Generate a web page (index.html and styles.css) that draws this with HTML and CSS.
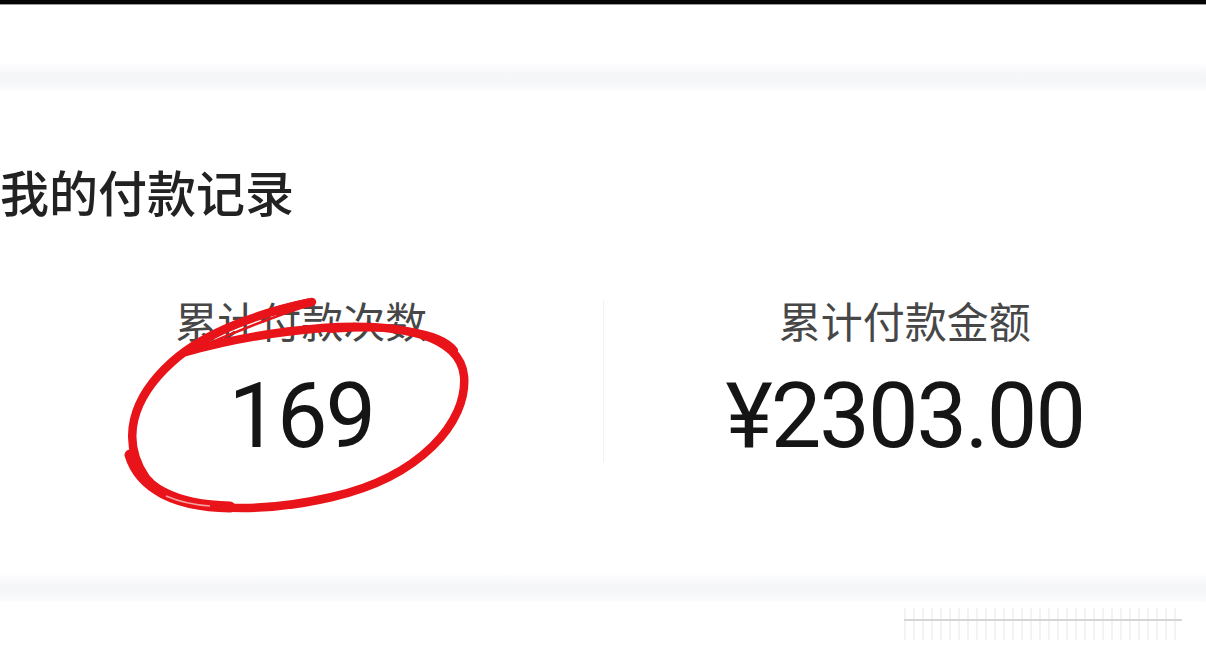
FILE: index.html
```html
<!DOCTYPE html>
<html lang="zh-CN">
<head>
    <meta charset="UTF-8">
    <meta name="viewport" content="width=device-width, initial-scale=1.0">
    <title>我的付款记录</title>
    <link rel="stylesheet" href="styles.css">
</head>
<body>

<div class="topbar"></div>
<div class="space"></div>
<div class="band"></div>

<div class="card">
    <h1 class="title">我的付款记录</h1>

    <div class="stats">
        <div class="stat">
            <div class="label">累计付款次数</div>
            <div class="value">169</div>

            <svg class="mark" width="380" height="240" viewBox="100 280 380 240">
                <g fill="none" stroke="#e8141a" stroke-linecap="round" stroke-linejoin="round">
                    <path stroke-width="8.5" d="M312 302 C 262 312, 205 332, 172 362 C 132 398, 120 440, 146 478 C 176 514, 258 514, 332 497 C 420 477, 468 422, 464 376 C 460 336, 402 322, 322 328 C 262 333, 214 344, 186 352"/>
                    <path stroke-width="3" d="M308 300 C 262 310, 222 326, 190 348"/>
                    <path stroke-width="3" d="M300 306 C 258 316, 220 332, 192 350"/>
                    <path stroke-width="2.5" d="M312 304 C 270 318, 230 334, 198 348"/>
                    <path stroke-width="11" d="M130 455 C 140 488, 175 506, 230 507"/>
                    <path stroke-width="6" d="M330 330 C 390 325, 440 330, 455 350"/>
                </g>
                <path d="M166 496 C 180 502, 195 505, 210 506" fill="none" stroke="#f6a0a0" stroke-width="1.5"/>
            </svg>
        </div>

        <div class="divider"></div>

        <div class="stat">
            <div class="label">累计付款金额</div>
            <div class="value">¥2303.00</div>
        </div>
    </div>
</div>

<div class="band"></div>

<div class="footer">
    <div class="stamp"></div>
</div>

</body>
</html>
```

FILE: styles.css
```css
* {
    margin: 0;
    padding: 0;
    box-sizing: border-box;
}

body {
    background: #fff;
    font-family: 'Noto Sans CJK SC', 'Noto Sans', sans-serif;
    color: #1d1d1f;
    overflow: hidden;
}

.topbar {
    height: 5px;
    background: #050505;
    border-bottom: 1px solid #9a9a9a;
}

.space {
    height: 59px;
}

.band {
    height: 27px;
    background: linear-gradient(to bottom, #fdfdfe, #f5f6f8 40%, #f6f7f9 70%, #fdfdfe);
}

.card {
    background: #fff;
    padding: 72px 0 108px;
}

.title {
    font-size: 49px;
    line-height: 56px;
    font-weight: 500;
    color: #222;
}

.stats {
    display: flex;
    align-items: center;
    margin-top: 76px;
}

.stat {
    flex: 1;
    position: relative;
    text-align: center;
}

.label {
    font-size: 42px;
    line-height: 50px;
    color: #474747;
}

.value {
    margin-top: 22px;
    font-family: 'Roboto', 'Noto Sans', sans-serif;
    font-size: 90px;
    line-height: 100px;
    color: #151515;
    letter-spacing: -2px;
}

.divider {
    width: 1px;
    height: 162px;
    background: #f2f2f2;
}

.mark {
    position: absolute;
    left: 100px;
    top: -15px;
}

.footer {
    display: flex;
    justify-content: flex-end;
    padding: 6px 24px 0 0;
}

.stamp {
    width: 278px;
    height: 32px;
    background:
        linear-gradient(to bottom, transparent 11px, #d6d6d6 11px, #d6d6d6 13px, transparent 13px),
        repeating-linear-gradient(to right, #f3f3f3 0 2px, transparent 2px 9px);
}
```
